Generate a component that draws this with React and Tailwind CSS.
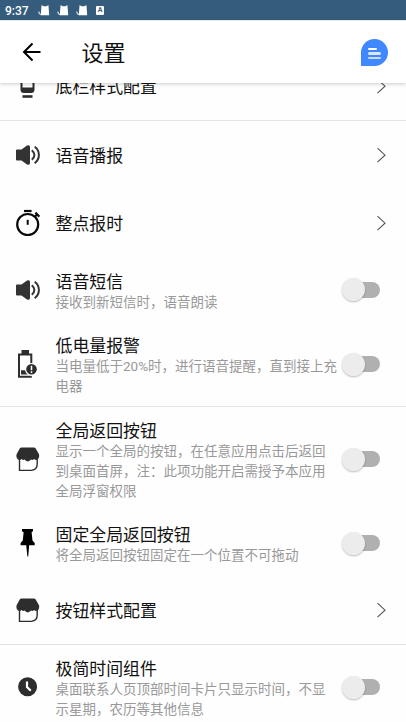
const ICONS = {
  dock: (
    <g fill="#2d2d2d">
      <path d="M4.5 2h14v15.5a3.5 3.5 0 0 1-3.5 3.5H8a3.5 3.5 0 0 1-3.5-3.5zM6.5 2v13.5h10V2z" fillRule="evenodd" />
      <rect x="6.5" y="23.2" width="10" height="2.6" />
    </g>
  ),
  speaker: (
    <g>
      <path d="M0 9.5Q0 8.5 1 8.5H5.5L11 4.6Q14 3.4 14 6V22Q14 24.6 11 23.4L5.5 19.5H1Q0 19.5 0 18.5z" fill="#333" />
      <path d="M15.8 9.3Q18.4 11.5 18.4 14T15.8 18.7M18.7 5.8Q22.9 9 22.9 14T18.7 22.2" fill="none" stroke="#333" strokeWidth="2" />
    </g>
  ),
  stopwatch: (
    <g fill="none" stroke="#0a0a0a">
      <circle cx="11.7" cy="15.5" r="10.5" strokeWidth="2.2" />
      <path d="M8 2h7.6" strokeWidth="2.2" />
      <path d="M11.7 10.8v5" strokeWidth="2" />
      <path d="M19.4 3.6l4 4M18.3 8.2l3-3" strokeWidth="2.2" />
    </g>
  ),
  battery: (
    <g>
      <path d="M5.5 0H13v4H5.5z" fill="#2d2d2d" />
      <path d="M15.3 14V4.4H3V26.8H15.8" fill="none" stroke="#2d2d2d" strokeWidth="2" />
      <path d="M5 20.2h4.4q.5 3 2.6 4.4H5z" fill="#2d2d2d" />
      <circle cx="15.5" cy="19.3" r="6.4" fill="#fefefe" />
      <circle cx="15.5" cy="19.3" r="5.3" fill="#2d2d2d" />
      <path d="M15.5 15.8v4.4M15.5 21.3v1.6" stroke="#fff" strokeWidth="1.5" />
    </g>
  ),
  store: (
    <g>
      <path d="M3.5 12V25.4H15.5Q21.2 24.6 21.2 19V12" fill="#fefefe" stroke="#2d2d2d" strokeWidth="1.4" />
      <path d="M5.6 2.6H17.8Q19 2.6 19.7 3.6L23 9.2Q23.8 12.6 21.6 14.6Q19.6 15.4 18 14Q16.6 15.6 15 14.6Q13.8 16.4 11.8 16.4T8.6 14.6Q7 15.6 5.6 14Q4 15.4 2 14.6Q-.2 12.6 .6 9.2L3.7 3.6Q4.4 2.6 5.6 2.6z" fill="#2d2d2d" />
    </g>
  ),
  pin: (
    <path d="M6 0H17V2.3L15.6 3.2L16.5 11.4L18.7 14V16.2H13.2L12.2 27.5H11.4L10.2 16.2H4.6V14L6.8 11.4L7.6 3.2L6 2.3z" fill="#000" />
  ),
  clock: (
    <g>
      <circle cx="11.6" cy="13.8" r="9.5" fill="#2d2d2d" />
      <path d="M11 8.5V14L14.8 17.8" fill="none" stroke="#fefefe" strokeWidth="2.2" />
    </g>
  ),
}

const ITEMS = [
  { icon: 'dock', title: '底栏样式配置', height: 'h-[68px]', divider: true },
  { icon: 'speaker', title: '语音播报', height: 'h-[68px]' },
  { icon: 'stopwatch', title: '整点报时', height: 'h-[68px]' },
  { icon: 'speaker', title: '语音短信', desc: '接收到新短信时，语音朗读', height: 'h-[65px]', toggle: true },
  { icon: 'battery', title: '低电量报警', desc: '当电量低于20%时，进行语音提醒，直到接上充\n电器', height: 'h-[84px]', toggle: true, divider: true },
  { icon: 'store', title: '全局返回按钮', desc: '显示一个全局的按钮，在任意应用点击后返回\n到桌面首屏，注：此项功能开启需授予本应用\n全局浮窗权限', height: 'h-[104px]', toggle: true },
  { icon: 'pin', title: '固定全局返回按钮', desc: '将全局返回按钮固定在一个位置不可拖动', height: 'h-[64px]', toggle: true },
  { icon: 'store', title: '按钮样式配置', height: 'h-[69px]', divider: true },
  { icon: 'clock', title: '极简时间组件', desc: '桌面联系人页顶部时间卡片只显示时间，不显\n示星期，农历等其他信息', height: 'h-[84px]', toggle: true },
]

function Cat() {
  return (
    <svg width="12" height="11" viewBox="0 0 12 11">
      <path d="M3.6 0L5.4 1.3H8.6L10.4 0L10.8 4.5L11.2 10.3H2.8L3.2 4.5z" fill="#fff" />
      <path d="M.9 6.5Q.4 9.6 3.4 9.6" fill="none" stroke="#fff" strokeWidth="1" />
    </svg>
  )
}

function StatusBar() {
  return (
    <div className="flex h-5 shrink-0 items-center bg-[#365c7d] pl-[5px] text-white">
      <span className="w-[33px] pt-px font-[Roboto] text-[12px] leading-5 font-medium">9:37</span>
      <div className="flex gap-[7px]">
        <Cat />
        <Cat />
        <Cat />
      </div>
      <div className="ml-2 flex h-[9px] w-[8px] items-center justify-center rounded-[1px] bg-white text-[7px] font-bold text-[#365c7d]">
        A
      </div>
    </div>
  )
}

function Header() {
  return (
    <header className="relative z-10 flex h-[63px] shrink-0 items-center border-t border-[#e4e9ee] bg-white pr-[18px] pl-[22px] shadow-[0_1px_4px_rgba(0,0,0,0.2)]">
      <svg width="20" height="20" viewBox="0 0 20 20" fill="none" stroke="#000" strokeWidth="2">
        <path d="M18.5 10H2M10.5 1.5L2 10L10.5 18.5" />
      </svg>
      <h1 className="ml-[39.5px] flex-1 pt-[3px] text-[22px] leading-8 text-[#111]">设置</h1>
      <div className="flex h-[27px] w-[27px] flex-col justify-center gap-[2px] rounded-full rounded-bl-[4px] bg-[#4088ff] pt-[3px] pl-[7px]">
        <span className="h-[2.5px] w-[9px] rounded-full bg-white" />
        <span className="h-[2.5px] w-[13px] rounded-full bg-white/80" />
        <span className="h-[2.5px] w-[13px] rounded-full bg-white/70" />
      </div>
    </header>
  )
}

function Toggle() {
  return (
    <div className="mr-[26px] flex h-4 w-[37px] items-center rounded-full bg-[#b0b0b0]">
      <div className="h-[23px] w-[23px] -ml-px shrink-0 rounded-full bg-[#ececec] shadow-[0_1px_2px_rgba(0,0,0,0.25)]" />
    </div>
  )
}

function Chevron() {
  return (
    <svg className="mr-5" width="10" height="16" viewBox="0 0 10 16" fill="none" stroke="#555" strokeWidth="1.1">
      <path d="M1.5 1.2L9 8.2L1.5 15.2" />
    </svg>
  )
}

function SettingRow({ icon, title, desc, height, toggle, divider }) {
  return (
    <div className={`flex shrink-0 items-center pl-4 ${height} ${divider ? 'box-content border-b border-[#e4e4e4]' : ''}`}>
      <svg width="24" height="28" viewBox="0 0 24 28" className="shrink-0">
        {ICONS[icon]}
      </svg>
      <div className={`ml-[15.5px] min-w-0 flex-1 whitespace-pre ${desc ? 'pt-[4px]' : 'pt-[2px]'}`}>
        <div className={`text-[16.9px] text-[#111] ${desc ? 'leading-[22px]' : 'leading-6'}`}>{title}</div>
        {desc && <div className="text-[13.5px] leading-[19.7px] text-[#999]">{desc}</div>}
      </div>
      {toggle ? <Toggle /> : <Chevron />}
    </div>
  )
}

export default function App() {
  return (
    <div className="flex h-[722px] w-full flex-col overflow-hidden bg-[#fefefe] font-[Roboto,'Noto_Sans_CJK_SC',sans-serif]">
      <StatusBar />
      <Header />
      <main className="flex min-h-0 flex-1 flex-col overflow-hidden">
        <div className="-mt-[31px] flex flex-col">
          {ITEMS.map((item) => (
            <SettingRow key={item.title} {...item} />
          ))}
        </div>
      </main>
    </div>
  )
}
